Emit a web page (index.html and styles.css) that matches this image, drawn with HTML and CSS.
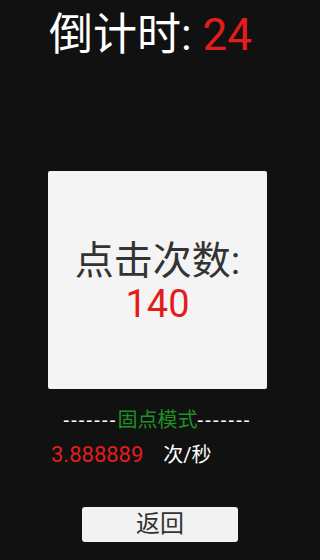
FILE: index.html
```html
<!DOCTYPE html>
<html lang="zh">
<head>
<meta charset="utf-8">
<link rel="stylesheet" href="styles.css">
</head>
<body>
<div class="screen">
  <div class="title">倒计时: <span class="red">24</span></div>
  <div class="panel">
    <div class="panel-label">点击次数:</div>
    <div class="panel-count red">140</div>
  </div>
  <div class="mode"><span class="dash">-------</span><span class="green">固点模式</span><span class="dash">-------</span></div>
  <div class="rate"><span class="red">3.888889</span><span class="unit">次/秒</span></div>
  <div class="btn-row"><div class="btn">返回</div></div>
</div>
</body>
</html>
```
FILE: styles.css
```css
html, body {
  margin: 0;
  padding: 0;
  background: #111111;
}
.screen {
  width: 315px;
  height: 560px;
  display: flex;
  flex-direction: column;
  font-family: "Roboto", "Noto Sans CJK SC", sans-serif;
  color: #ffffff;
}
.red { color: #e41c1c; }
.green { color: #1f9124; }
.title {
  margin-top: 8px;
  font-size: 44px;
  line-height: 54px;
  text-align: center;
  padding-right: 14px;
}
.panel {
  margin: 109px auto 0;
  width: 219px;
  height: 218px;
  background: #f4f4f4;
  border-radius: 2px;
  display: flex;
  flex-direction: column;
  align-items: center;
  justify-content: center;
  padding-top: 2px;
  box-sizing: border-box;
}
.panel-label {
  color: #333333;
  font-size: 39px;
  line-height: 46px;
}
.panel-count {
  font-size: 38px;
  line-height: 40px;
}
.mode {
  margin-top: 18px;
  font-size: 20px;
  line-height: 26px;
  text-align: center;
}
.dash {
  color: #ffffff;
  letter-spacing: 2.2px;
}
.rate {
  margin-top: 8px;
  padding-left: 51px;
  font-size: 22px;
  line-height: 28px;
  display: flex;
  gap: 20px;
}
.unit {
  font-size: 20px;
}
.btn-row {
  margin-top: 38px;
  display: flex;
  justify-content: center;
  padding-left: 5px;
}
.btn {
  width: 156px;
  height: 35px;
  background: #f2f2f2;
  border-radius: 3px;
  color: #333333;
  font-size: 24px;
  line-height: 35px;
  text-align: center;
}
```
